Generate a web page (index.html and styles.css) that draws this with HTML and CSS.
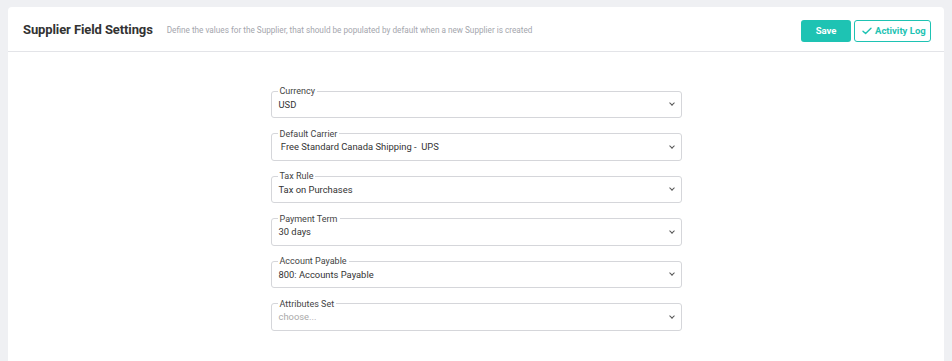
FILE: index.html
```html
<!DOCTYPE html>
<html lang="en">
<head>
    <meta charset="UTF-8">
    <meta name="viewport" content="width=device-width, initial-scale=1.0">
    <title>Supplier Field Settings</title>
    <link rel="stylesheet" href="styles.css">
</head>
<body>

<div class="card">
    <div class="card-header">
        <h1>Supplier Field Settings</h1>
        <p class="subtitle">Define the values for the Supplier, that should be populated by default when a new Supplier is created</p>
        <div class="actions">
            <button type="button" class="btn btn-save">Save</button>
            <button type="button" class="btn btn-log">
                <svg width="10" height="8" viewBox="0 0 10 8"><path d="M1 4.2 L3.6 6.6 L9 1.2" fill="none" stroke="currentColor" stroke-width="1.4" stroke-linecap="round" stroke-linejoin="round"/></svg>
                Activity Log
            </button>
        </div>
    </div>

    <form class="settings">
        <fieldset class="field">
            <legend>Currency</legend>
            <div class="value">USD<span class="chevron"></span></div>
        </fieldset>
        <fieldset class="field">
            <legend>Default Carrier</legend>
            <div class="value">&nbsp;Free Standard Canada Shipping - &nbsp;UPS<span class="chevron"></span></div>
        </fieldset>
        <fieldset class="field">
            <legend>Tax Rule</legend>
            <div class="value">Tax on Purchases<span class="chevron"></span></div>
        </fieldset>
        <fieldset class="field">
            <legend>Payment Term</legend>
            <div class="value">30 days<span class="chevron"></span></div>
        </fieldset>
        <fieldset class="field">
            <legend>Account Payable</legend>
            <div class="value">800: Accounts Payable<span class="chevron"></span></div>
        </fieldset>
        <fieldset class="field">
            <legend>Attributes Set</legend>
            <div class="value placeholder">choose...<span class="chevron"></span></div>
        </fieldset>
    </form>
</div>

</body>
</html>
```

FILE: styles.css
```css
body {
    margin: 0;
    background-color: #eff0f3;
    font-family: Roboto, "Noto Sans", Arial, sans-serif;
    color: #333;
}
.card {
    background-color: #fff;
    margin: 7px 8px 0 8px;
    border-radius: 4px;
    height: 400px;
}
.card-header {
    display: flex;
    align-items: center;
    height: 44px;
    padding: 0 13px 0 15px;
    border-bottom: 1px solid #e3e4e8;
}
h1 {
    margin: 0;
    font-size: 13px;
    font-weight: 700;
    color: #333;
    letter-spacing: -0.1px;
}
.subtitle {
    margin: 1px 0 0 14px;
    font-size: 8.2px;
    color: #a4a6ad;
}
.actions {
    margin-left: auto;
    display: flex;
    gap: 3px;
    margin-top: 3px;
}
.btn {
    height: 22px;
    border-radius: 3px;
    font-family: inherit;
    font-size: 9.5px;
    font-weight: 700;
    white-space: nowrap;
    cursor: pointer;
    display: flex;
    align-items: center;
    gap: 3px;
}
.btn-save {
    width: 50px;
    justify-content: center;
    border: none;
    background-color: #1ec3b3;
    color: #fff;
}
.btn-log {
    width: 77px;
    padding: 0 0 0 7px;
    border: 1px solid #1ec3b3;
    background-color: #fff;
    color: #1ec3b3;
}
.settings {
    width: 411px;
    margin: 0 auto;
    padding-top: 34px;
}
.field {
    margin: 0 0 10.5px 0;
    padding: 0 7px 5px 6px;
    border: 1px solid #d5d6da;
    border-radius: 3px;
    min-width: 0;
}
legend {
    padding: 0 2px;
    font-size: 9px;
    line-height: 10px;
    color: #444;
}
.value {
    display: flex;
    align-items: center;
    height: 16px;
    padding-left: 1px;
    font-size: 9.4px;
    color: #333;
}
.value.placeholder {
    color: #aaa;
}
.chevron {
    margin-left: auto;
    width: 3px;
    height: 3px;
    border-right: 1.3px solid #555;
    border-bottom: 1.3px solid #555;
    transform: rotate(45deg);
    margin-top: -2px;
}
```
